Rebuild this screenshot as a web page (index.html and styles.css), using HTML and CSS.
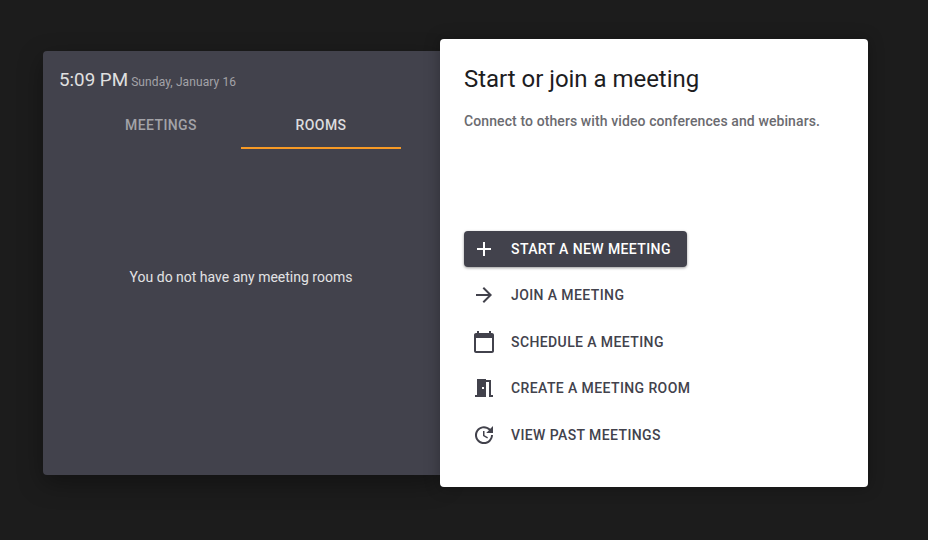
FILE: index.html
```html
<!DOCTYPE html>
<html lang="en">
<head>
    <meta charset="UTF-8">
    <meta name="viewport" content="width=device-width, initial-scale=1.0">
    <title>Start or join a meeting</title>
    <link rel="stylesheet" href="styles.css">
</head>
<body>
<div class="container">
    <!-- Left panel -->
    <div class="panel">
        <div class="clock">
            <span class="time">5:09 PM</span>
            <span class="date">Sunday, January 16</span>
        </div>
        <div class="tabs">
            <div class="tab">MEETINGS</div>
            <div class="tab active">ROOMS</div>
        </div>
        <div class="empty">You do not have any meeting rooms</div>
    </div>

    <!-- Right card -->
    <div class="card">
        <h1 class="card-title">Start or join a meeting</h1>
        <p class="card-text">Connect to others with video conferences and webinars.</p>
        <div class="actions">
            <button class="action primary">
                <svg class="icon" viewBox="0 0 24 24"><path d="M19 13h-6v6h-2v-6H5v-2h6V5h2v6h6v2z"/></svg>
                START A NEW MEETING
            </button>
            <button class="action">
                <svg class="icon" viewBox="0 0 24 24"><path d="M12 4l-1.410 1.410L16.170 11H4v2h12.170l-5.580 5.590L12 20l8-8z"/></svg>
                JOIN A MEETING
            </button>
            <button class="action">
                <svg class="icon" viewBox="0 0 24 24"><path d="M20 3h-1V1h-2v2H7V1H5v2H4c-1.100 0-2 .9-2 2v16c0 1.100.9 2 2 2h16c1.100 0 2-.9 2-2V5c0-1.100-.9-2-2-2zm0 18H4V8h16v13z"/></svg>
                SCHEDULE A MEETING
            </button>
            <button class="action">
                <svg class="icon" viewBox="0 0 24 24"><path d="M14 6v15H3v-2h2V3h9v1h5v15h2v2h-4V6h-3zm-4 5v2h2v-2h-2z"/></svg>
                CREATE A MEETING ROOM
            </button>
            <button class="action">
                <svg class="icon" viewBox="0 0 24 24"><path d="M21 10.120h-6.780l2.740-2.820c-2.730-2.700-7.150-2.800-9.880-.1-2.730 2.710-2.730 7.080 0 9.790s7.150 2.710 9.880 0C18.320 15.650 19 14.080 19 12.100h2c0 1.980-.88 4.550-2.640 6.290-3.510 3.480-9.210 3.480-12.720 0-3.500-3.470-3.530-9.110-.02-12.580s9.140-3.470 12.650 0L21 3v7.120zM12.500 8v4.250l3.500 2.080-.72 1.210L11 13V8h1.500z"/></svg>
                VIEW PAST MEETINGS
            </button>
        </div>
    </div>
</div>
</body>
</html>
```

FILE: styles.css
```css
/* Global styles */
* {
    margin: 0;
    padding: 0;
    box-sizing: border-box;
}

body {
    font-family: Roboto, "Liberation Sans", sans-serif;
    background-color: #1c1c1c;
    height: 540px;
    overflow: hidden;
}

.container {
    display: flex;
    align-items: center;
    padding: 39px 0 0 43px;
}

/* Left panel */
.panel {
    width: 397px;
    height: 424px;
    background-color: #42424c;
    border-radius: 4px 0 0 4px;
    box-shadow: 0 8px 24px rgba(0, 0, 0, 0.35);
    display: flex;
    flex-direction: column;
}

.clock {
    padding: 18px 16px 0;
    display: flex;
    align-items: baseline;
    gap: 3px;
    height: 50px;
}

.time {
    font-size: 18.800px;
    color: #e0e0e0;
}

.date {
    font-size: 12px;
    letter-spacing: 0.1px;
    color: #a2a2a8;
}

.tabs {
    width: 396px;
    display: flex;
    justify-content: center;
}

.tab {
    width: 160px;
    height: 48px;
    padding-top: 16px;
    text-align: center;
    font-size: 14px;
    font-weight: 500;
    letter-spacing: 0.4px;
    color: #a3a3a8;
}

.tab.active {
    color: #dcdcde;
    border-bottom: 2px solid #f79a25;
}

.empty {
    width: 396px;
    margin-top: 120px;
    text-align: center;
    font-size: 14px;
    color: #e2e2e4;
}

/* Right card */
.card {
    width: 428px;
    height: 448px;
    background-color: #ffffff;
    border-radius: 4px;
    box-shadow: 0 0 16px rgba(0, 0, 0, 0.3);
    padding: 26px 24px 0;
    position: relative;
}

.card-title {
    font-size: 24px;
    font-weight: 400;
    line-height: 28px;
    letter-spacing: -0.03px;
    color: #1d1d1f;
}

.card-text {
    margin-top: 20px;
    font-size: 14px;
    font-weight: 500;
    line-height: 16px;
    letter-spacing: 0.1px;
    color: #6b6b70;
}

.actions {
    margin-top: 101.750px;
    display: flex;
    flex-direction: column;
    align-items: flex-start;
    gap: 10.500px;
}

.action {
    display: flex;
    align-items: center;
    gap: 15px;
    height: 36px;
    padding: 0 16px 0 8px;
    border: none;
    background: none;
    border-radius: 4px;
    font-family: inherit;
    font-size: 14px;
    font-weight: 500;
    letter-spacing: 0.4px;
    color: #42424c;
}

.action.primary {
    background-color: #42424c;
    color: #ffffff;
    box-shadow: 0 1px 3px rgba(0, 0, 0, 0.4);
}

.icon {
    width: 24px;
    height: 24px;
    fill: #42424c;
    flex-shrink: 0;
}

.primary .icon {
    fill: #ffffff;
}
```
